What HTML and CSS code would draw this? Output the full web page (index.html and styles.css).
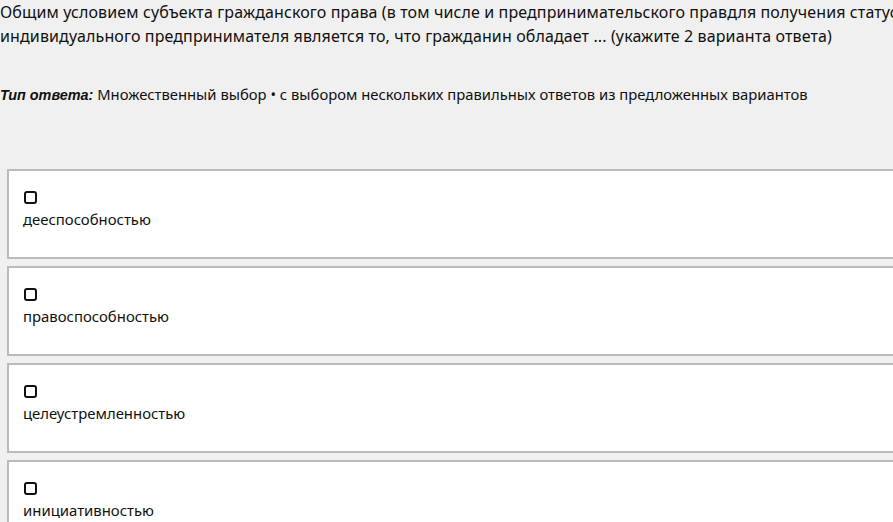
FILE: index.html
```html
<!DOCTYPE html>
<html lang="ru">
<head>
    <meta charset="UTF-8">
    <meta name="viewport" content="width=device-width, initial-scale=1.0">
    <title>Вопрос теста</title>
    <link rel="stylesheet" href="styles.css">
</head>
<body>
    <div class="question">
        <p class="question-text">Общим условием субъекта гражданского права (в том числе и предпринимательского правдля получения статуса индивидуального предпринимателя является то, что гражданин обладает ... (укажите 2 варианта ответа)</p>

        <div class="answer-type"><span class="answer-type-label">Тип ответа:</span> Множественный выбор • с выбором нескольких правильных ответов из предложенных вариантов</div>

        <div class="options">
            <label class="option">
                <span class="box"></span>
                <span class="option-text">дееспособностью</span>
            </label>
            <label class="option">
                <span class="box"></span>
                <span class="option-text">правоспособностью</span>
            </label>
            <label class="option">
                <span class="box"></span>
                <span class="option-text">целеустремленностью</span>
            </label>
            <label class="option">
                <span class="box"></span>
                <span class="option-text">инициативностью</span>
            </label>
        </div>
    </div>
</body>
</html>
```

FILE: styles.css
```css
body {
    margin: 0;
    background-color: #f0f0f0;
    color: #111;
    font-family: "Noto Sans", "Open Sans", sans-serif;
    overflow: hidden;
}
.question {
    width: 960px;
}
.question-text {
    margin: 0;
    font-size: 16px;
    line-height: 24px;
    letter-spacing: 0.12px;
}
.answer-type {
    margin-top: 34px;
    font-size: 14.8px;
    line-height: 24px;
}
.answer-type-label {
    font-family: "Liberation Sans", Arial, sans-serif;
    font-size: 14.4px;
    font-weight: bold;
    font-style: italic;
}
.options {
    display: flex;
    flex-direction: column;
    gap: 7px;
    margin: 62px 0 0 7px;
}
.option {
    display: flex;
    flex-direction: column;
    align-items: flex-start;
    gap: 5px;
    height: 90px;
    box-sizing: border-box;
    padding: 20px 14px 0;
    background-color: #fff;
    border: 2px solid #bbb;
}
.box {
    width: 13px;
    height: 13px;
    box-sizing: border-box;
    border: 2px solid #111;
    border-radius: 3px;
    margin-left: 1px;
}
.option-text {
    font-size: 14.9px;
    line-height: 20px;
}
```
